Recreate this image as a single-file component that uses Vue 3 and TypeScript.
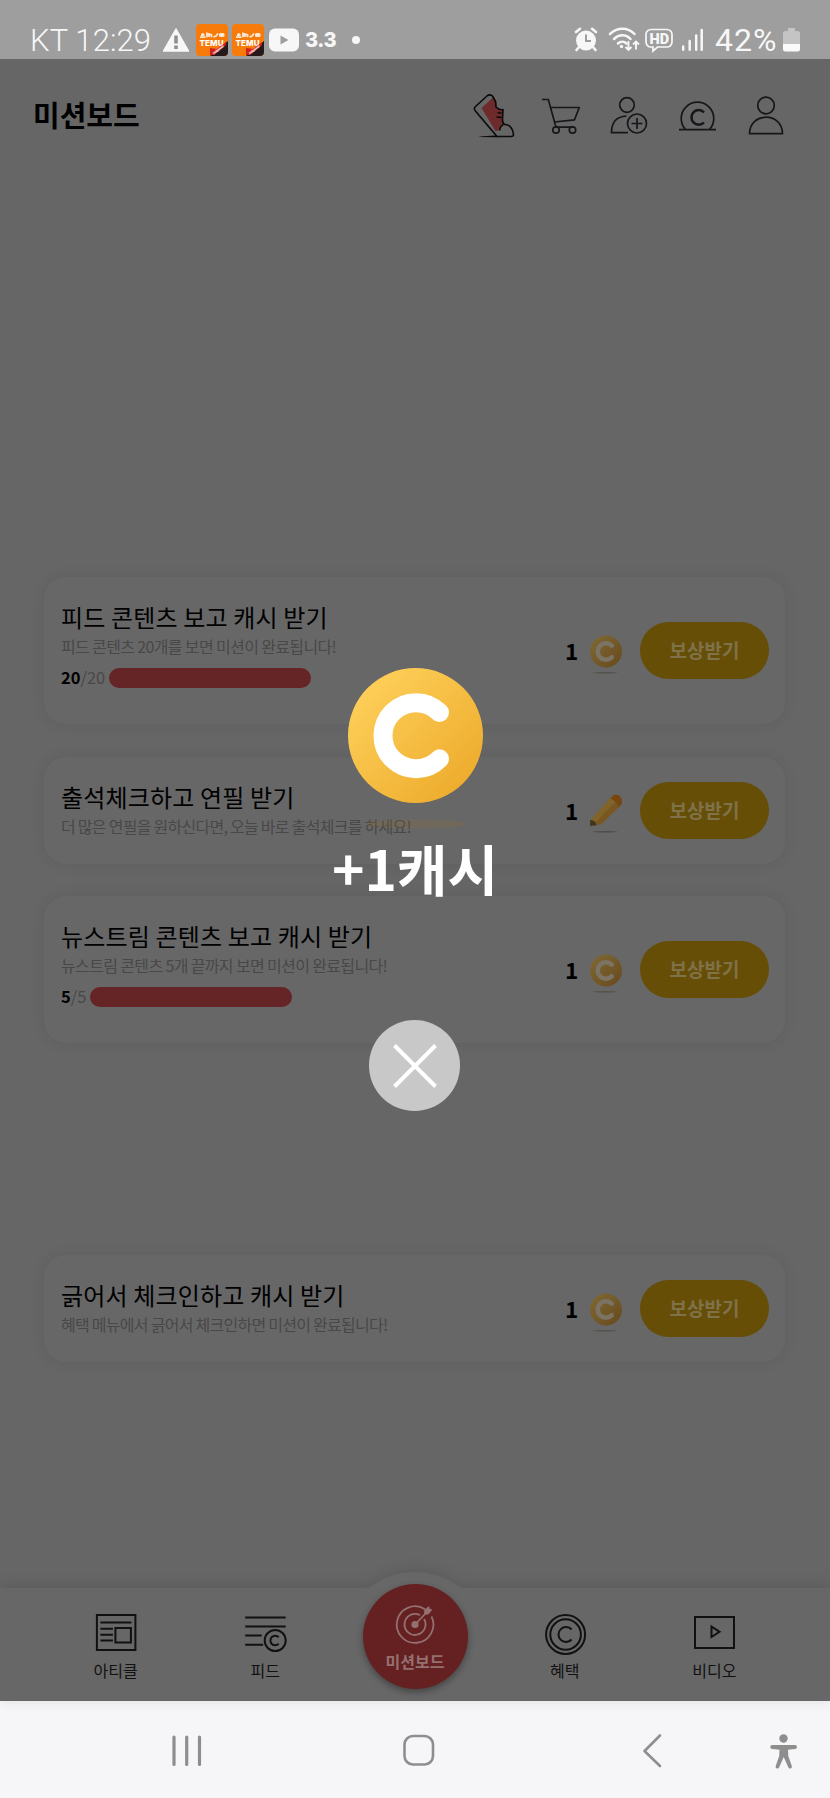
<script setup lang="ts">
interface Mission {
  id: number
  title: string
  description: string
  reward: number
  icon: 'coin' | 'pencil'
  done?: number
  total?: number
  gap: number
}

const missions: Mission[] = [
  { id: 1, title: '피드 콘텐츠 보고 캐시 받기', description: '피드 콘텐츠 20개를 보면 미션이 완료됩니다!', reward: 1, icon: 'coin', done: 20, total: 20, gap: 0 },
  { id: 2, title: '출석체크하고 연필 받기', description: '더 많은 연필을 원하신다면, 오늘 바로 출석체크를 하세요!', reward: 1, icon: 'pencil', gap: 33 },
  { id: 3, title: '뉴스트림 콘텐츠 보고 캐시 받기', description: '뉴스트림 콘텐츠 5개 끝까지 보면 미션이 완료됩니다!', reward: 1, icon: 'coin', done: 5, total: 5, gap: 32 },
  { id: 4, title: '긁어서 체크인하고 캐시 받기', description: '혜택 메뉴에서 긁어서 체크인하면 미션이 완료됩니다!', reward: 1, icon: 'coin', gap: 212 },
]
</script>

<template>
  <div class="screen">
    <div class="status">
      <div class="status-left">
        <span class="clock">KT 12:29</span>
        <svg class="warn" width="28" height="26" viewBox="0 0 28 26">
          <path d="M14 2 26.5 24H1.500z" fill="#f7f7f7" stroke="#f7f7f7" stroke-width="1.500" stroke-linejoin="round" />
          <path d="M14 8.500v8M14 18.500v3.500" stroke="#8f8f8f" stroke-width="3.600" />
        </svg>
        <svg v-for="n in 2" :key="n" class="temu" width="32" height="32" viewBox="0 0 32 32">
          <rect width="32" height="32" rx="4" fill="#f77b0b" />
          <path d="M4 13.200h5.500M6.700 9v3M5 11h3.500M11 13.200V9.500l4.500 1.500v2.200M13 10v3M17.500 13l2.500-1 2-2.500" stroke="#fbe9d6" stroke-width="1.800" fill="none" />
          <rect x="23" y="9" width="5.500" height="4" rx="1.500" fill="#fbe9d6" />
          <text x="15.500" y="22" text-anchor="middle" textLength="24" class="temu-text">TEMU</text>
          <path d="M14 32 32 17V28a4 4 0 0 1-4 4z" fill="#24191b" />
          <path d="M14 31v-7l7 1 9-7v3L18 31z" fill="#d21f1c" />
          <text x="18" y="30.500" transform="rotate(-38 18 30.500)" textLength="13" class="temu-tag">Halloween</text>
        </svg>
        <svg class="tube" width="30" height="24" viewBox="0 0 30 24">
          <rect width="30" height="23" y=".5" rx="6" fill="#f7f7f7" />
          <path d="M11.500 7.500v9L19.500 12z" fill="#9e9e9e" />
        </svg>
        <span class="version">3.3</span>
        <span class="dot"></span>
      </div>
      <div class="status-right">
        <svg width="140" height="36" viewBox="570 22 140 36" fill="none" stroke="#f7f7f7">
          <circle cx="586" cy="40.500" r="10" fill="#f7f7f7" stroke="none" />
          <path d="M576 32l4-3.200M596 32l-4-3.200M579 47l-2.500 3M593 47l2.500 3" stroke-width="2.600" stroke-linecap="round" />
          <path d="M586 34.500V41h5" stroke="#9e9e9e" stroke-width="2" />
          <path d="M610 34c7-7 18-7 24.500 0M614 39c5-5 12-5 16.500 0M618 43.500c2.500-2.500 6-2.500 8.500 0" stroke-width="2.500" stroke-linecap="round" />
          <circle cx="621.500" cy="46.500" r="1.700" fill="#f7f7f7" stroke="none" />
          <path d="M628.500 41v9M625.500 47l3 3 3-3M636 49.500V42M633 44.500l3-3 3 3" stroke-width="1.900" />
          <path d="M651 29.500h16a5 5 0 0 1 5 5V42a5 5 0 0 1-5 5h-9.500l-4.500 4v-4h-2a5 5 0 0 1-5-5v-7.500a5 5 0 0 1 5-5z" stroke-width="1.700" />
          <text x="659.300" y="44" text-anchor="middle" class="hd">HD</text>
          <path d="M683.200 46.500v3.200M689.700 41v8.700M696.200 35.500v14.200M701.700 30v19.700" stroke-width="2.500" stroke-linecap="round" />
        </svg>
        <span class="battery-text">42%</span>
        <svg width="17" height="24" viewBox="0 0 17 24">
          <path d="M5 0h7v3h2.500A2.500 2.500 0 0 1 17 5.500V16H0V5.500A2.500 2.500 0 0 1 2.500 3H5z" fill="#c4c4c4" />
          <path d="M0 16h17v5a2.500 2.500 0 0 1-2.500 2.500h-12A2.500 2.500 0 0 1 0 21z" fill="#fafafa" />
        </svg>
      </div>
    </div>

    <header class="header">
      <h1>미션보드</h1>
      <div class="tools">
        <svg width="44" height="48" viewBox="472 92 44 48">
          <path d="M481.500 108 493 97.500l3.500 5 .5 6 6 2-1 12.500-3.500 7.500-3 .500z" fill="#6f2a2b" />
          <path d="M475 110.500q-1.500-2 .5-4L487.500 95.500q2.500-1.500 5 .5l3 5.500.5 5.500q3.500 3.500 7 2.500l-.5 10q0 4 2 5c4-.5 8.500 3 9 10.500q-.5 1.500-2 1.500H497z" fill="none" stroke="#0a0a0a" stroke-width="1.600" stroke-linejoin="round" />
          <path d="M503.500 124.500q-3 1-4 6M497.500 112.500l4 .8M496.500 117l5 .5" fill="none" stroke="#0a0a0a" stroke-width="1.400" />
          <path d="M478 137q10-1.500 17-1.500l3 1.800z" fill="#0a0a0a" />
        </svg>
        <svg width="44" height="48" viewBox="540 92 44 48" class="line">
          <path d="M542 99.500h6.300L556 127.200M551 107.500h28.300L574.500 119.800 554.500 122M556 127.200h18" />
          <circle cx="556" cy="130" r="3.200" /><circle cx="572.500" cy="130" r="3.200" />
        </svg>
        <svg width="44" height="48" viewBox="608 92 44 48" class="line">
          <circle cx="627" cy="105" r="7.300" />
          <path d="M628 132.700H611.500c0-10 5-16.200 15-16.700" />
          <circle cx="637" cy="123.500" r="9.500" /><path d="M631.500 123.500h11M637 118v11" />
        </svg>
        <svg width="44" height="48" viewBox="676 92 44 48" class="line">
          <path d="M679 129.700h37M685.500 129.500a16.300 16.300 0 1 1 24 0" />
          <path d="M704 112.300a7.300 7.300 0 1 0 0 10.200" stroke-width="2.500" />
        </svg>
        <svg width="44" height="48" viewBox="744 92 44 48" class="line">
          <circle cx="766" cy="105.500" r="8.300" />
          <path d="M749.500 133.700c0-22 33-22 33 0z" />
        </svg>
      </div>
    </header>

    <main class="missions">
      <section v-for="m in missions" :key="m.id" class="card" :class="{ tall: m.total }" :style="{ marginTop: m.gap + 'px' }">
        <div class="info">
          <h2>{{ m.title }}</h2>
          <p>{{ m.description }}</p>
          <div v-if="m.total" class="progress">
            <span><b>{{ m.done }}</b>/{{ m.total }}</span>
            <i class="bar"></i>
          </div>
        </div>
        <div class="reward">
          <span class="count">{{ m.reward }}</span>
          <svg v-if="m.icon === 'coin'" width="32" height="48" viewBox="0 0 32 48">
            <defs>
              <linearGradient :id="'c' + m.id" x1="0" y1="0" x2="1" y2="1">
                <stop offset="0" stop-color="#806a36" /><stop offset="1" stop-color="#67491c" />
              </linearGradient>
            </defs>
            <circle cx="16" cy="24.500" r="16" :fill="`url(#c${m.id})`" />
            <path d="M21.700 18.700a8.200 8.200 0 1 0 0 11.600" fill="none" stroke="#7b7363" stroke-width="4.600" stroke-linecap="round" />
            <ellipse cx="15" cy="45.700" rx="12.500" ry=".8" fill="#55514a" />
          </svg>
          <svg v-else width="32" height="48" viewBox="0 0 32 48">
            <path d="M.5 33.500 20.500 11.500 29.500 19.500 11 37.500l-10.500 1.200z" fill="#785721" />
            <path d="M.5 33 20.500 10.500l5 4.500L6 35z" fill="#80642b" />
            <path d="M20.500 11.500l3-3.500q7-1.500 8.500 5.500v3l-3.500 4q-1.500-6-8-9z" fill="#79460f" />
            <path d="M.2 39v-6q5.500.5 6.300 5.300z" fill="#40361f" />
            <ellipse cx="15" cy="44.800" rx="12.500" ry=".8" fill="#4d4c4a" />
          </svg>
          <button type="button">보상받기</button>
        </div>
      </section>
    </main>

    <nav class="tabs">
      <svg class="tabs-shape" width="830" height="133" viewBox="0 1568 830 133">
        <path d="M-20 1588H364Q369 1588 374 1584.500Q392 1572 415 1572T456 1584.500Q461 1588 466 1588H850V1740H-20z" fill="#676767" />
      </svg>
      <div class="tab">
        <svg width="44" height="44" viewBox="93.600 1611 44 44" class="ink">
          <path d="M96.500 1615h38.500v35H96.500zM100 1622.500h31M100 1628.700h12.500M100 1634.700h12.500M100 1640.500h12.500M115 1628h15.500v14.500H115z" />
        </svg>
        <span>아티클</span>
      </div>
      <div class="tab">
        <svg width="44" height="44" viewBox="243.300 1611 44 44" class="ink">
          <path d="M245.500 1617.500H286M245.500 1626.500H286M245.500 1635.500h16.500M245.500 1644.700h18" />
          <circle cx="275.500" cy="1640.500" r="10.500" />
          <path d="M279 1637.200a4.800 4.800 0 1 0 0 6.600" />
        </svg>
        <span>피드</span>
      </div>
      <div class="tab main-tab">
        <div class="disc">
          <svg width="44" height="44" viewBox="393 1602 44 44" fill="none" stroke="#947071" stroke-width="1.800">
            <path d="M431.500 1616.500a18.300 18.300 0 1 1-6.500-7.300M424 1619a10.500 10.500 0 1 1-4-3.800" />
            <circle cx="415" cy="1624.500" r="2.700" fill="#947071" />
            <path d="M415 1624.500 426 1613" />
            <path d="M424.500 1614.500v-4.500l4.300-3.500.7 2.500 2.500.7-3.500 4.300z" fill="#947071" stroke-width=".6" />
          </svg>
          <span>미션보드</span>
        </div>
      </div>
      <div class="tab">
        <svg width="44" height="44" viewBox="542.900 1611 44 44" class="ink">
          <circle cx="565.500" cy="1634.500" r="19.500" /><circle cx="565.500" cy="1634.500" r="15.300" />
          <path d="M571.500 1629.500a7.500 7.500 0 1 0 0 10" />
        </svg>
        <span>혜택</span>
      </div>
      <div class="tab">
        <svg width="44" height="44" viewBox="692 1611 44 44" class="ink">
          <path d="M695 1617h39v31H695zM711.500 1626.500v10.500l8-5.200z" />
        </svg>
        <span>비디오</span>
      </div>
    </nav>

    <div class="system">
      <svg width="830" height="97" viewBox="0 1701 830 97" fill="none" stroke="#8e8e8f" stroke-width="2.600" stroke-linecap="round" stroke-linejoin="round">
        <path d="M174 1737v27.500M186.700 1737v27.500M199.500 1737v27.500" stroke-width="3.200" />
        <rect x="404.500" y="1736" width="28.500" height="28.500" rx="8.500" />
        <path d="M660 1735.500 644.500 1751l15.500 15" />
        <g fill="#8e8e8f" stroke="none">
          <circle cx="783.500" cy="1738.500" r="4.200" />
          <path d="M772 1745h23a1.800 1.800 0 0 1 0 4l-7 .7.300 6.300 3.500 10a1.800 1.800 0 0 1-3.500 1.300L783.700 1757l-4.500 10.300a1.800 1.800 0 0 1-3.500-1.300l3.500-10 .300-6.300-7-.7a1.800 1.800 0 0 1-.500-4z" />
        </g>
      </svg>
    </div>

    <div class="modal">
      <svg width="135" height="165" viewBox="348 668 135 165">
        <defs>
          <linearGradient id="gold" x1=".1" y1=".1" x2=".9" y2=".9">
            <stop offset="0" stop-color="#fed05a" /><stop offset="1" stop-color="#edab2c" />
          </linearGradient>
        </defs>
        <circle cx="415.500" cy="735.500" r="67.500" fill="url(#gold)" />
        <path d="M439.500 712.500a33 33 0 1 0 0 46.300" fill="none" stroke="#fff" stroke-width="19" stroke-linecap="round" />
        <ellipse cx="415" cy="824" rx="51" ry="4.500" fill="#a07018" opacity=".15" />
      </svg>
      <strong>+1캐시</strong>
      <button type="button" class="close" aria-label="닫기">
        <svg width="46" height="46" viewBox="0 0 46 46"><path d="M2.500 2.500l41 41M43.500 2.500l-41 41" stroke="#fff" stroke-width="4" /></svg>
      </button>
    </div>
  </div>
</template>

<style>
body { margin: 0; }
</style>

<style scoped>
.screen {
  position: relative;
  display: flex;
  flex-direction: column;
  width: 830px;
  height: 1798px;
  overflow: hidden;
  background: #666;
  color: #000;
  font-family: "Noto Sans CJK KR", sans-serif;
}
svg { display: block; flex: none; }
h1, h2, p { margin: 0; font-weight: 400; }
button { border: 0; padding: 0; font-family: inherit; }

.status {
  display: flex;
  justify-content: space-between;
  height: 59px;
  padding: 20px 30px 0;
  box-sizing: border-box;
  background: #9e9e9e;
  color: #f7f7f7;
  font-family: Roboto, sans-serif;
}
.status-left, .status-right { display: flex; align-items: center; height: 40px; }
.clock { width: 132px; font-size: 31px; font-weight: 300; letter-spacing: .1px; white-space: nowrap; }
.warn { margin-right: 6px; }
.temu { margin-right: 4px; }
.temu-text { font: 800 8px Inter, sans-serif; fill: #fff; }
.temu-tag { font: 700 3.2px Roboto, sans-serif; fill: #fff; }
.tube { margin: 0 6px 0 1px; }
.version { font: 800 20px Inter, sans-serif; letter-spacing: -.4px; }
.dot { width: 8px; height: 8px; margin-left: 16px; border-radius: 50%; background: #f7f7f7; }
.hd { font: 900 14.5px Roboto, sans-serif; fill: #f7f7f7; stroke: none; }
.battery-text { width: 73px; padding-left: 5px; box-sizing: border-box; font-size: 32px; letter-spacing: 1px; }

.header {
  display: flex;
  align-items: center;
  justify-content: space-between;
  height: 114px;
  padding: 0 42px 0 33px;
}
.header h1 { padding-bottom: 4px; font-size: 29px; font-weight: 700; line-height: 40px; }
.tools { display: flex; gap: 24px; }
.line { fill: none; stroke: #16171a; stroke-width: 1.7; stroke-linejoin: round; }

.missions { flex: 1; padding: 404px 45px 0 44px; }
.card {
  display: flex;
  justify-content: space-between;
  box-sizing: border-box;
  height: 107px;
  padding: 0 16px 0 17px;
  border-radius: 22px;
  background: #676767;
  box-shadow: 0 0 14px 2px rgba(0, 0, 0, .06);
}
.card.tall { height: 147px; }
.info { padding-top: 24px; white-space: nowrap; }
.info h2 { font-size: 24px; line-height: 32px; letter-spacing: .16px; }
.info p { color: #484848; font-size: 16px; line-height: 26px; letter-spacing: -.73px; }
.tall .info p { letter-spacing: -.64px; }
.progress { display: flex; align-items: center; gap: 4px; height: 20px; margin-top: 9px; color: #484848; font-size: 16.500px; line-height: 20px; }
.progress span { margin-top: -2px; }
.progress b { color: #000; }
.bar { width: 202px; height: 20px; border-radius: 10px; background: #652426; }
.reward { display: flex; align-items: center; }
.count { width: 25px; padding-bottom: 2px; font-size: 22.500px; font-weight: 700; line-height: 30px; }
.reward button {
  width: 129px;
  height: 57px;
  margin-left: 18px;
  padding-bottom: 2px;
  border-radius: 29px;
  background: #664e06;
  color: #7f724a;
  font-size: 19px;
  font-weight: 700;
}

.tabs { position: relative; display: flex; justify-content: center; height: 113px; }
.tabs-shape { position: absolute; left: 0; top: -20px; filter: drop-shadow(0 -2px 7px rgba(0, 0, 0, .12)); }
.tab { position: relative; display: flex; flex-direction: column; align-items: center; width: 149.700px; padding-top: 23px; box-sizing: border-box; }
.tab span { margin-top: 3px; color: #111; font-size: 16px; line-height: 24px; }
.ink { fill: none; stroke: #111; stroke-width: 2; }
.main-tab { padding: 0; }
.disc {
  display: flex;
  flex-direction: column;
  align-items: center;
  width: 105px;
  height: 105px;
  margin-top: -4px;
  padding-top: 18px;
  box-sizing: border-box;
  border-radius: 50%;
  background: #652022;
  box-shadow: 0 3px 7px rgba(0, 0, 0, .35);
}
.disc span { color: #957071; font-weight: 700; }

.system { height: 97px; background: #f6f6f8; }

.modal {
  position: absolute;
  left: 0;
  right: 0;
  top: 668px;
  display: flex;
  flex-direction: column;
  align-items: center;
}
.modal strong { margin-top: 4px; color: #fff; font-size: 55px; font-weight: 700; line-height: 60px; }
.close {
  display: grid;
  place-items: center;
  width: 91px;
  height: 91px;
  margin-top: 123px;
  margin-right: 1px;
  border-radius: 50%;
  background: #c8c8c8;
}
</style>
